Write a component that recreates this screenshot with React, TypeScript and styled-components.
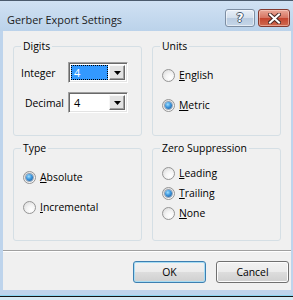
import React from "react";
import styled, { createGlobalStyle, css } from "styled-components";

const FONT = `"Open Sans", "Noto Sans", Arial, sans-serif`;

const GlobalStyle = createGlobalStyle`
  html, body { margin: 0; padding: 0; background: #ffffff; }
  body { font-family: ${FONT}; font-size: 10.4px; color: #000; }
  * { box-sizing: border-box; }
`;

const Window = styled.div`
  width: 293px;
  height: 300px;
  display: flex;
  flex-direction: column;
  background: #bed4ec;
  border-top: 1px solid #4b5b6d;
  overflow: hidden;
`;

const TitleBar = styled.div`
  height: 30px;
  flex: none;
  display: flex;
  align-items: flex-start;
  padding: 8px 3px 0 7px;
  background: linear-gradient(#d0e1f3, #bbd2ea);
`;

const Title = styled.div`
  flex: 1;
  margin-top: 3px;
  font-size: 10.9px;
  line-height: 16px;
  color: #1b1b1b;
`;

const CaptionButtons = styled.div`
  display: flex;
  gap: 3px;
`;

const CaptionButton = styled.div<{ $kind: "help" | "close" }>`
  height: 18px;
  border-radius: 3px;
  display: flex;
  align-items: center;
  justify-content: center;
  ${(p) =>
    p.$kind === "help"
      ? css`
          width: 30px;
          border: 1px solid #7d8ea3;
          background: linear-gradient(#e8eff8 0%, #d3dfec 48%, #b9cbe0 52%, #c5d6e8 100%);
          box-shadow: inset 0 0 0 1px rgba(255, 255, 255, 0.55);
        `
      : css`
          width: 32px;
          border: 1px solid #83392f;
          background: linear-gradient(#e9a898 0%, #d77562 48%, #c4452f 52%, #cf6a50 100%);
          box-shadow: inset 0 0 0 1px rgba(255, 220, 210, 0.5);
        `}
`;

const HelpGlyph = styled.span`
  font-family: "DejaVu Sans", sans-serif;
  font-weight: bold;
  font-size: 12px;
  line-height: 12px;
  color: #fff;
  text-shadow: -1px 0 #46566a, 1px 0 #46566a, 0 -1px #46566a, 0 1px #46566a;
`;

const Client = styled.div`
  margin: 0 2px 0 3px;
  height: 259px;
  flex: none;
  background: #f0f0f0;
  display: flex;
  flex-direction: column;
  padding-top: 8px;
`;

const Groups = styled.div`
  display: grid;
  grid-template-columns: 129px 129px;
  grid-template-rows: 97px 100px;
  column-gap: 10px;
  row-gap: 5px;
  padding: 0 10px;
`;

const GroupBox = styled.fieldset`
  margin: 0;
  padding: 0;
  min-width: 0;
  border: 1px solid #d5dfe5;
  border-radius: 3px;
`;

const Legend = styled.legend`
  margin-left: 7px;
  padding: 0 2px;
  line-height: 15px;
`;

const FieldGrid = styled.div`
  display: flex;
  flex-direction: column;
  gap: 9px;
  padding: 8px 0 0 7px;
`;

const FieldRow = styled.div`
  display: flex;
  align-items: center;
`;

const FieldLabel = styled.label<{ $indent?: number }>`
  width: 47px;
  padding-left: ${(p) => p.$indent ?? 0}px;
`;

const Combo = styled.div`
  width: 60px;
  height: 21px;
  display: flex;
  padding: 2px;
  background: #fff;
  border: 1px solid;
  border-color: #a0a0a0 #ffffff #ffffff #a0a0a0;
  box-shadow: inset 1px 1px 0 #696969, inset -1px -1px 0 #e3e3e3;
`;

const ComboValue = styled.div<{ $selected?: boolean }>`
  flex: 1;
  margin-right: 1px;
  display: flex;
  align-items: center;
  padding-left: 2px;
  font-size: 11px;
  border: 1px solid transparent;
  ${(p) =>
    p.$selected &&
    css`
      background: #3399ff;
      color: #fff;
      border: 1px dotted #000;
    `}
`;

const DropButton = styled.div`
  width: 16px;
  display: flex;
  align-items: center;
  justify-content: center;
  background: #e3e3e3;
  border: 1px solid;
  border-color: #f7f7f7 #696969 #696969 #f7f7f7;
  box-shadow: inset -1px -1px 0 #a0a0a0;
`;

const RadioList = styled.div<{ $gap: number; $top: number }>`
  display: flex;
  flex-direction: column;
  gap: ${(p) => p.$gap}px;
  padding: ${(p) => p.$top}px 0 0 9px;
`;

const RadioItem = styled.label`
  display: flex;
  align-items: center;
  gap: 4px;
  height: 16px;
`;

const RadioMark = styled.span<{ $checked?: boolean }>`
  width: 13px;
  height: 13px;
  flex: none;
  border-radius: 50%;
  border: 1px solid #959595;
  background: radial-gradient(circle at 65% 70%, #ffffff 0%, #f4f4f4 40%, #d6d6d6 100%);
  display: flex;
  align-items: center;
  justify-content: center;
  ${(p) =>
    p.$checked &&
    css`
      &::after {
        content: "";
        width: 7px;
        height: 7px;
        border-radius: 50%;
        background: radial-gradient(circle at 40% 35%, #9fe0ff 0%, #3b95dd 45%, #1c4f86 100%);
        box-shadow: 0 0 0 1px rgba(40, 70, 110, 0.45);
      }
    `}
`;

const Key = styled.span`
  text-decoration: underline;
`;

const Separator = styled.div`
  margin-top: 9px;
  height: 2px;
  border-top: 1px solid #a0a0a0;
  border-bottom: 1px solid #ffffff;
`;

const ButtonRow = styled.div`
  display: flex;
  justify-content: flex-end;
  gap: 10px;
  padding: 9px 2px 0 0;
`;

const DialogButton = styled.button<{ $default?: boolean }>`
  width: 73px;
  height: 22px;
  padding: 0;
  font-family: ${FONT};
  font-size: 10.4px;
  color: #000;
  border-radius: 3px;
  border: 1px solid ${(p) => (p.$default ? "#3c7fb1" : "#707070")};
  background: linear-gradient(#f2f2f2 0%, #ebebeb 50%, #dddddd 51%, #cfcfcf 100%);
  box-shadow: inset 0 0 0 1px ${(p) => (p.$default ? "#a7dcf3" : "#fcfcfc")};
`;

const BottomFrame = styled.div`
  flex: 1;
  background: linear-gradient(
    #bed4ec 0px,
    #bed4ec 5px,
    #8ad6f3 5px,
    #8ad6f3 6px,
    #151515 6px,
    #151515 7px,
    #d6eaf3 7px
  );
`;

const Arrow = () => (
  <svg width="7" height="4" viewBox="0 0 7 4">
    <path d="M0 0H7L3.5 4Z" fill="#000" />
  </svg>
);

const CloseX = () => (
  <svg width="13" height="11" viewBox="0 0 13 11">
    <path d="M2 1.5L11 9.5M11 1.5L2 9.5" stroke="#4a2a26" strokeWidth="4" strokeLinecap="square" />
    <path d="M2 1.5L11 9.5M11 1.5L2 9.5" stroke="#ffffff" strokeWidth="2" strokeLinecap="square" />
  </svg>
);

type Opt = { key: string; rest: string; checked?: boolean };

const Radios = ({ items, gap, top }: { items: Opt[]; gap: number; top: number }) => (
  <RadioList $gap={gap} $top={top}>
    {items.map((o) => (
      <RadioItem key={o.key + o.rest}>
        <RadioMark $checked={o.checked} />
        <span>
          <Key>{o.key}</Key>
          {o.rest}
        </span>
      </RadioItem>
    ))}
  </RadioList>
);

export default function App() {
  return (
    <>
      <GlobalStyle />
      <Window>
        <TitleBar>
          <Title>Gerber Export Settings</Title>
          <CaptionButtons>
            <CaptionButton $kind="help">
              <HelpGlyph>?</HelpGlyph>
            </CaptionButton>
            <CaptionButton $kind="close">
              <CloseX />
            </CaptionButton>
          </CaptionButtons>
        </TitleBar>
        <Client>
          <Groups>
            <GroupBox>
              <Legend>Digits</Legend>
              <FieldGrid>
                <FieldRow>
                  <FieldLabel>Integer</FieldLabel>
                  <Combo>
                    <ComboValue $selected>4</ComboValue>
                    <DropButton>
                      <Arrow />
                    </DropButton>
                  </Combo>
                </FieldRow>
                <FieldRow>
                  <FieldLabel $indent={4}>Decimal</FieldLabel>
                  <Combo>
                    <ComboValue>4</ComboValue>
                    <DropButton>
                      <Arrow />
                    </DropButton>
                  </Combo>
                </FieldRow>
              </FieldGrid>
            </GroupBox>
            <GroupBox>
              <Legend>Units</Legend>
              <Radios
                gap={14}
                top={13}
                items={[
                  { key: "E", rest: "nglish" },
                  { key: "M", rest: "etric", checked: true },
                ]}
              />
            </GroupBox>
            <GroupBox>
              <Legend>Type</Legend>
              <Radios
                gap={14}
                top={13}
                items={[
                  { key: "A", rest: "bsolute", checked: true },
                  { key: "I", rest: "ncremental" },
                ]}
              />
            </GroupBox>
            <GroupBox>
              <Legend>Zero Suppression</Legend>
              <Radios
                gap={4}
                top={9}
                items={[
                  { key: "L", rest: "eading" },
                  { key: "T", rest: "railing", checked: true },
                  { key: "N", rest: "one" },
                ]}
              />
            </GroupBox>
          </Groups>
          <Separator />
          <ButtonRow>
            <DialogButton $default>OK</DialogButton>
            <DialogButton>Cancel</DialogButton>
          </ButtonRow>
        </Client>
        <BottomFrame />
      </Window>
    </>
  );
}
